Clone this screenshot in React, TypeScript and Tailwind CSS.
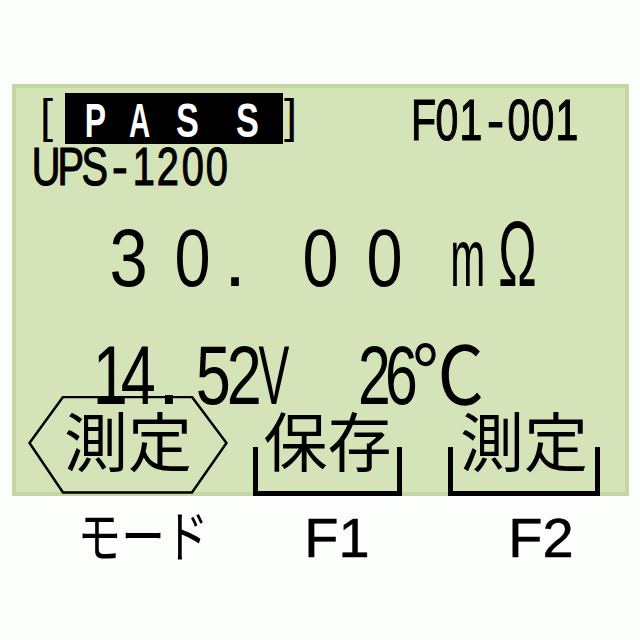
import React from "react";

type CP = { c: string; w: string; s?: string; m?: string };
function Ch({ c, w, s = "", m = "" }: CP) {
  return (
    <span className={`flex shrink-0 justify-center ${w} ${m}`}>
      <span className={`inline-block whitespace-pre ${s}`}>{c}</span>
    </span>
  );
}

export default function App() {
  return (
    <div className="h-[640px] w-[640px] overflow-hidden bg-[#fcfefc] pl-[12px] pt-[84px] font-['Liberation_Sans',Arial,sans-serif] text-black">
      <div className="flex h-[412px] w-[617px] flex-col bg-[#d4e3b8] shadow-[inset_0_0_0_4px_#c4d7a2]">
        {/* Row 1 */}
        <div className="flex h-[56px] items-start">
          <span className="ml-[28px] mt-[8px] w-[13px] shrink-0 text-[47px] leading-none">[</span>
          <div className="ml-[12px] mt-[9px] flex h-[51px] w-[218px] shrink-0 items-start bg-black text-[49px] font-bold leading-none text-white">
            <Ch c="P" w="w-[40px]" m="ml-[10px] mt-[3px]" s="scale-x-[0.65]" />
            <Ch c="A" w="w-[40px]" m="ml-[5px] mt-[3px]" s="scale-x-[0.6]" />
            <Ch c="S" w="w-[40px]" m="ml-[7px] mt-[3px]" s="scale-x-[0.7]" />
            <Ch c="S" w="w-[40px]" m="ml-[20px] mt-[3px]" s="scale-x-[0.7]" />
          </div>
          <span className="ml-[1px] mt-[8px] w-[13px] shrink-0 text-[47px] leading-none">]</span>
          <div className="ml-[114px] mt-[7.5px] flex text-[57px] leading-none [-webkit-text-stroke:1.2px_#000]">
            <Ch c="F" w="w-[24px]" s="scale-x-[0.72]" />
            <Ch c="0" w="w-[24px]" s="scale-x-[0.72]" />
            <Ch c="1" w="w-[24px]" s="scale-x-[0.72]" />
            <Ch c="-" w="w-[24px]" s="scale-x-[0.9]" />
            <Ch c="0" w="w-[24px]" s="scale-x-[0.72]" />
            <Ch c="0" w="w-[24px]" s="scale-x-[0.72]" />
            <Ch c="1" w="w-[24px]" s="scale-x-[0.72]" />
          </div>
        </div>

        {/* Row 2 */}
        <div className="flex h-[53px] items-start text-[53px] leading-none [-webkit-text-stroke:1.2px_#000]">
          <Ch c="U" w="w-[24.4px]" m="ml-[22px]" s="scale-x-[0.75]" />
          <Ch c="P" w="w-[24.4px]" s="scale-x-[0.75]" />
          <Ch c="S" w="w-[24.4px]" s="scale-x-[0.75]" />
          <Ch c="-" w="w-[24.4px]" s="scale-x-[0.9]" />
          <Ch c="1" w="w-[24.4px]" s="scale-x-[0.75]" />
          <Ch c="2" w="w-[24.4px]" s="scale-x-[0.75]" />
          <Ch c="0" w="w-[24.4px]" s="scale-x-[0.75]" />
          <Ch c="0" w="w-[24.4px]" s="scale-x-[0.75]" />
        </div>

        {/* Row 3 */}
        <div className="mt-[15px] flex h-[92px] items-baseline text-[81px] leading-none">
          <Ch c="3" w="w-[64px]" m="ml-[85px]" s="scale-x-[0.85]" />
          <Ch c="0" w="w-[64px]" s="scale-x-[0.8]" />
          <Ch c="." w="w-[20px]" />
          <Ch c="0" w="w-[64px]" m="ml-[44px]" s="scale-x-[0.8]" />
          <Ch c="0" w="w-[64px]" s="scale-x-[0.8]" />
          <Ch c="m" w="w-[40px]" m="ml-[31px]" s="scale-x-[0.52]" />
          <Ch c="Ω" w="w-[40px]" m="ml-[9px] text-[92px]" s="scale-x-[0.56]" />
        </div>

        {/* Row 4 */}
        <div className="mt-[33px] flex h-[63px] items-baseline text-[84px] leading-none">
          <Ch c="1" w="w-[28px]" m="ml-[84px]" s="scale-x-[0.75]" />
          <Ch c="4" w="w-[28px]" s="scale-x-[0.75]" />
          <Ch c="." w="w-[28px]" m="ml-[3px]" />
          <Ch c="5" w="w-[28px]" m="ml-[16px]" s="scale-x-[0.75]" />
          <Ch c="2" w="w-[28px]" m="ml-[3px]" s="scale-x-[0.75]" />
          <Ch c="V" w="w-[28px]" m="ml-[2px]" s="scale-x-[0.55]" />
          <Ch c="2" w="w-[28px]" m="ml-[72px]" s="scale-x-[0.7]" />
          <Ch c="6" w="w-[28px]" m="ml-[-1px]" s="scale-x-[0.7]" />
          <Ch
            c="℃"
            w="w-[80px]"
            m="ml-[-7px] -mt-[4px] self-start text-[80px] font-['Noto_Sans_CJK_JP',sans-serif]"
            s="scale-x-[0.9]"
          />
        </div>

        {/* Row 5: soft keys */}
        <div className="flex h-[100px] items-start font-['Noto_Sans_CJK_JP',sans-serif] text-[64px] leading-none">
          <div className="relative ml-[16px] flex h-[98px] w-[200px] shrink-0 justify-center">
            <svg className="absolute inset-0" width="200" height="98" viewBox="0 0 200 98">
              <polygon
                points="1.5,47 35,1 164,1 198.5,47 164,96.5 35,96.5"
                fill="none"
                stroke="#000"
                strokeWidth="2.5"
                strokeLinejoin="miter"
              />
            </svg>
            <span className="relative mt-[10px]">測定</span>
          </div>
          <div className="ml-[25px] flex w-[149px] shrink-0 flex-col items-center">
            <span className="mt-[10px] h-[64px]">保存</span>
            <div className="-mt-[23px] h-[49px] w-full border-x-[5px] border-b-[5px] border-black" />
          </div>
          <div className="ml-[46px] flex w-[152px] shrink-0 flex-col items-center">
            <span className="mt-[10px] h-[64px]">測定</span>
            <div className="-mt-[23px] h-[49px] w-full border-x-[5px] border-b-[5px] border-black" />
          </div>
        </div>
      </div>

      {/* Labels */}
      <div className="mt-[9px] flex items-start leading-none">
        <Ch
          c="モード"
          w="w-[180px]"
          m="ml-[41px] text-[56px] font-['Noto_Sans_CJK_JP',sans-serif]"
          s="scale-x-[0.78]"
        />
        <Ch c="F1" w="w-[100px]" m="ml-[54px] mt-[5px] text-[56px] [-webkit-text-stroke:0.5px_#000]" />
        <Ch c="F2" w="w-[100px]" m="ml-[104px] mt-[5px] text-[56px] [-webkit-text-stroke:0.5px_#000]" />
      </div>
    </div>
  );
}
